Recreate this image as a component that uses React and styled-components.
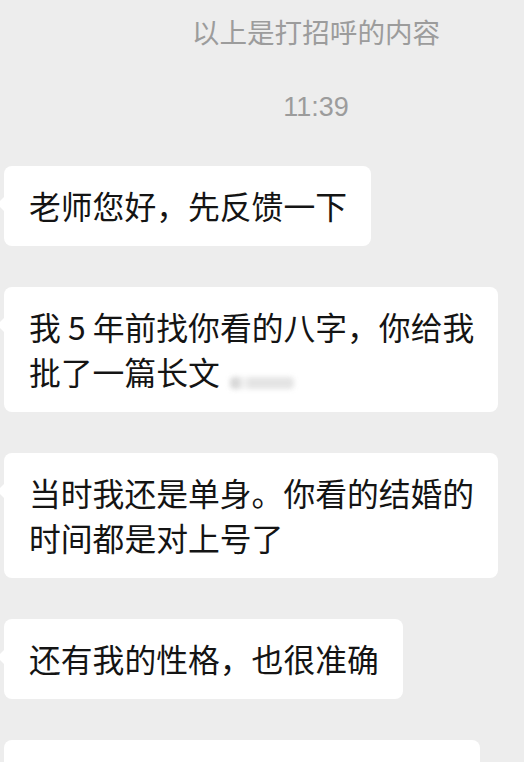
import React from 'react'
import styled, { createGlobalStyle } from 'styled-components'

const GlobalStyle = createGlobalStyle`
  html, body {
    margin: 0;
    padding: 0;
    background: #ededed;
  }
  body {
    font-family: "Noto Sans CJK SC", "Noto Sans", sans-serif;
    -webkit-font-smoothing: antialiased;
  }
`

const Screen = styled.div`
  width: 524px;
  height: 762px;
  overflow: hidden;
  background: #ededed;
`

const SystemNote = styled.div`
  padding-left: 108px;
  text-align: center;
  color: #9c9c9c;
  font-size: ${p => (p.$time ? '27px' : '27.6px')};
  font-family: ${p => (p.$time ? '"Liberation Sans", sans-serif' : 'inherit')};
  line-height: 45px;
  margin-top: ${p => p.$top}px;
`

const MessageList = styled.div`
  display: flex;
  flex-direction: column;
  align-items: flex-start;
  gap: 41px;
  padding-left: 4px;
  margin-top: 36px;
`

const Bubble = styled.div`
  position: relative;
  box-sizing: border-box;
  background: #fff;
  border-radius: 8px;
  padding: 17px 24px 18px 25px;
  color: #141414;
  font-size: 31.8px;
  line-height: 45px;
  white-space: nowrap;
  ${p => p.$width && `width: ${p.$width}px; height: 80px;`}

  &::before {
    content: '';
    position: absolute;
    left: -7px;
    top: 30px;
    border-style: solid;
    border-width: 8px 8px 8px 0;
    border-color: transparent #fff transparent transparent;
  }
`

const Blurred = styled.span`
  display: inline-block;
  width: 64px;
  height: 12px;
  margin-left: 10px;
  vertical-align: -4px;
  border-radius: 4px;
  background: linear-gradient(90deg, #cfcfcf 0 16%, #ececec 16% 28%, #dedede 28% 100%);
  filter: blur(2.5px);
  opacity: 0.8;
`

export default function App() {
  return (
    <Screen>
      <GlobalStyle />
      <SystemNote $top={9}>以上是打招呼的内容</SystemNote>
      <SystemNote $time $top={31}>11:39</SystemNote>
      <MessageList>
        <Bubble>老师您好，先反馈一下</Bubble>
        <Bubble>
          我 5 年前找你看的八字，你给我
          <br />
          批了一篇长文<Blurred />
        </Bubble>
        <Bubble>
          当时我还是单身。你看的结婚的
          <br />
          时间都是对上号了
        </Bubble>
        <Bubble>还有我的性格，也很准确</Bubble>
        <Bubble $width={476} />
      </MessageList>
    </Screen>
  )
}
